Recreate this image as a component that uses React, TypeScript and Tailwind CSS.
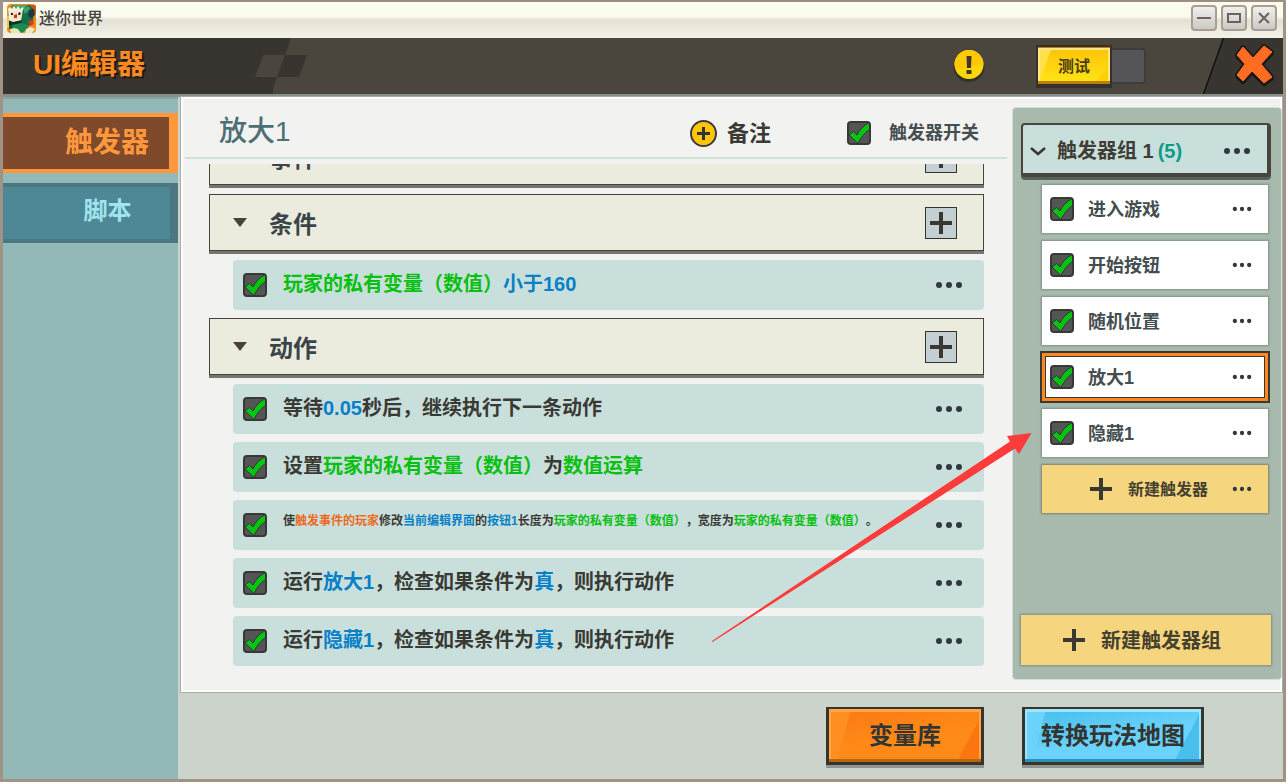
import { useState, type ReactNode } from "react";
import clsx from "clsx";

type Tone = "text" | "value" | "variable" | "event";
type Part = [string, Tone?];
type Rule = { id: string; parts: Part[]; small?: boolean };

const TONES: Record<Tone, string> = {
  text: "text-[#3a3a34]",
  value: "text-[#0880c8]",
  variable: "text-[#08c010]",
  event: "text-[#ee6a20]",
};

const CONDITIONS: Rule[] = [
  { id: "c1", parts: [["玩家的私有变量（数值）", "variable"], ["小于160", "value"]] },
];

const ACTIONS: Rule[] = [
  { id: "a1", parts: [["等待"], ["0.05", "value"], ["秒后，继续执行下一条动作"]] },
  { id: "a2", parts: [["设置"], ["玩家的私有变量（数值）", "variable"], ["为"], ["数值运算", "variable"]] },
  {
    id: "a3",
    small: true,
    parts: [
      ["使"],
      ["触发事件的玩家", "event"],
      ["修改"],
      ["当前编辑界面", "value"],
      ["的"],
      ["按钮1", "value"],
      ["长度为"],
      ["玩家的私有变量（数值）", "variable"],
      ["，宽度为"],
      ["玩家的私有变量（数值）", "variable"],
      ["。"],
    ],
  },
  { id: "a4", parts: [["运行"], ["放大1", "value"], ["，检查如果条件为"], ["真", "value"], ["，则执行动作"]] },
  { id: "a5", parts: [["运行"], ["隐藏1", "value"], ["，检查如果条件为"], ["真", "value"], ["，则执行动作"]] },
];

const TRIGGERS = ["进入游戏", "开始按钮", "随机位置", "放大1", "隐藏1"];

function Check({ label, id }: { label?: string; id?: string }) {
  return (
    <span className="grid size-6 shrink-0">
      <input
        id={id}
        type="checkbox"
        defaultChecked
        aria-label={label}
        className="peer col-start-1 row-start-1 size-6 appearance-none rounded border-2 border-[#383838] bg-[#555]"
      />
      <svg viewBox="0 0 24 24" className="pointer-events-none invisible col-start-1 row-start-1 size-6 peer-checked:visible">
        <path
          d="M2 14 6.500 10.500 10 14C12.500 8.500 16.500 4.500 22.500 1.500V8.500C17.500 12 13.500 17 11 22.500Z"
          fill="#05c512"
          stroke="#333"
          strokeWidth="1"
        />
      </svg>
    </span>
  );
}

function Dots({ small = false, label }: { small?: boolean; label: string }) {
  return (
    <button aria-label={label} className="flex h-6 w-7 shrink-0 items-center justify-center text-[#30393c]">
      <svg viewBox="0 0 28 8" className={clsx("h-2 shrink-0", small ? "w-5" : "w-7")}>
        <circle cx="4" cy="4" r="3" fill="currentColor" />
        <circle cx="14" cy="4" r="3" fill="currentColor" />
        <circle cx="24" cy="4" r="3" fill="currentColor" />
      </svg>
    </button>
  );
}

function Plus() {
  return (
    <svg viewBox="0 0 22 22" className="size-[22px] shrink-0" fill="#3a3832">
      <path d="M9 0h4v9h9v4h-9v9H9v-9H0V9h9z" />
    </svg>
  );
}

function Logo() {
  return (
    <svg viewBox="0 0 29 29" className="size-[29px] rounded">
      <rect width="29" height="29" fill="#f58a10" />
      <path d="M20 1h9v9z" fill="#c8551a" />
      <path d="m1 6 5-5h16l4 4v14l-9 6H2z" fill="#0f5a3a" />
      <path d="m2 5 5-4h14l-5 5 1 3H2z" fill="#46a86c" />
      <path d="m1 5 2-2 2 2 2-3 2 3 2-3 2 3 3-2 2 3 1-2-1 5-2 8-8 2-6-2z" fill="#f4efd6" />
      <path d="m3 7 13 1-2 7-9 2z" fill="#f9e3c4" />
      <path d="M4 9h2v2H4zM12 8l2 1-1 2h-2z" fill="#26241f" />
      <path d="m7 11 3-1v4H7z" fill="#c23a2c" />
      <path d="m16 5 6-3 5 4-1 13-9 3-3-5z" fill="#127044" />
      <path d="m16 5 6-3 1 3-5 5z" fill="#3da36a" />
      <path d="m22 6 5-1 1 6-4 3-3-2z" fill="#22364a" />
      <path d="m1 16 5 2 9-2-1 4-6 2-7-1z" fill="#0a3427" />
      <path d="m5 21 9-2 8 2-2 5-6 3H7z" fill="#1c8a50" />
      <path d="m3 25 4-1 4 1 3 4H4z" fill="#e2e8ae" />
      <path d="m21 17 5-1 1 4-4 2z" fill="#cc3f28" />
      <path d="m19 25 5-2 4 2-3 4h-7z" fill="#f0e6c0" />
      <path d="M0 12h2v12H0z" fill="#f6c244" />
    </svg>
  );
}

function WindowBar() {
  const icons = [
    { label: "最小化", d: "M1 8h14" },
    { label: "最大化", d: "M2 4h12v8H2z" },
    { label: "关闭", d: "m3 3 10 10M13 3 3 13" },
  ];
  return (
    <div className="flex h-[38px] shrink-0 items-center border-t-2 border-[#9b8f85] bg-linear-to-b from-[#fbfbee] from-40% via-[#e5e1d5] via-50% to-[#f4f2e8] pb-1 pl-1 pr-1.5">
      <Logo />
      <span className="ml-[3px] pt-0.5 text-base font-medium text-[#45433f]">迷你世界</span>
      <div className="ml-auto flex gap-1">
        {icons.map((icon) => (
          <button
            key={icon.label}
            aria-label={icon.label}
            className="flex size-[26px] items-center justify-center rounded border-2 border-[#a89e92] bg-linear-to-b from-[#efefec] to-[#cbcac5]"
          >
            <svg viewBox="0 0 16 16" className="size-4" fill="none" stroke="#6c6259" strokeWidth="2">
              <path d={icon.d} />
            </svg>
          </button>
        ))}
      </div>
    </div>
  );
}

function Header() {
  return (
    <header className="flex h-14 shrink-0 bg-[#4a463e]">
      <div className="flex w-[270px] items-center bg-[#383530] pb-0.5 pl-[30px]">
        <h1 className="text-[28px] font-bold text-[#ff8a1e] [text-shadow:2px_2px_0_#1e1c18]">UI编辑器</h1>
      </div>
      <svg viewBox="0 0 60 56" className="-ml-5 h-14 w-[60px]">
        <path d="M0 0h38L18 56H0z" fill="#383530" />
        <path d="M10.500 17H32L24 39H2z" fill="#4a463e" />
        <path d="M32 17h22l-8 22H24z" fill="#383530" />
      </svg>
      <div className="ml-auto flex">
        <button aria-label="提示" className="mr-[51px] flex w-8 items-center">
          <svg viewBox="0 0 32 32" className="size-8">
            <circle cx="16" cy="16.500" r="15.500" fill="#32302b" />
            <circle cx="16" cy="14.500" r="14.500" fill="#ffd60a" />
            <path d="M1.500 14.500a14.500 14.500 0 0 1 29 0L3 20z" fill="#ffc905" />
            <path d="M13.500 6h5l-.5 12h-4zM13.500 20h5v4h-5z" fill="#3c3830" />
          </svg>
        </button>
        <div className="flex items-center pr-[57px]">
          <button className="h-[43px] w-[76px] border-2 border-b-4 border-[#35322d] bg-[#b8800a] pb-[3px] pt-px">
            <span className="flex h-full items-center justify-center border-x-2 border-t-2 border-[#ffe680] bg-[linear-gradient(110deg,#ffe04a_14%,transparent_14%),linear-gradient(130deg,transparent_88%,#ffcf0c_88%),linear-gradient(#ffc40a,#ffe314)] pt-1 text-base font-bold text-[#4a3c14]">
              测试
            </span>
          </button>
          <span className="h-9 w-[34px] rounded-r border-2 border-l-0 border-[#3e3c3b] bg-[#555457]" />
        </div>
        <button aria-label="关闭编辑器" className="w-20">
          <svg viewBox="0 0 80 56" className="h-14 w-20">
            <path d="M20.500 0H80v56H.5z" fill="#383530" />
            <path d="M20.500 0 .5 56" stroke="#111" strokeWidth="1.500" />
            <g strokeLinejoin="round">
              <path d="m40 11 10 11 11-12 8 6-11 12 11 13-8 6-12-12-9 10-6-6 8-11-8-9z" fill="#1b1916" stroke="#1b1916" strokeWidth="3" />
              <path d="m40 9 10 11L61 8l8 6-11 12 11 13-8 6-12-12-9 10-6-6 8-11-8-9z" fill="#1b1916" stroke="#1b1916" strokeWidth="4" />
              <path d="m40 9 10 11L61 8l8 6-11 12 11 13-8 6-12-12-9 10-6-6 8-11-8-9z" fill="#ff6c22" stroke="#ff6c22" strokeWidth="1" />
            </g>
          </svg>
        </button>
      </div>
    </header>
  );
}

function Sidebar() {
  return (
    <nav className="flex w-[175px] shrink-0 flex-col gap-2.5 border-t-2 border-[#86a6a5] bg-[#92b8b7] pt-3.5">
      <button className="flex h-[60px] items-center justify-center border-y-4 border-r-[9px] border-[#ff983c] bg-[#7e4a2b] pl-[42px] text-[28px] font-bold text-[#ff983c]">
        触发器
      </button>
      <button className="flex h-[60px] items-center justify-center border-y-4 border-r-8 border-[#4b7780] bg-[#4e8897] pb-1 pl-[42px] text-2xl font-bold text-[#a0e4ec]">
        脚本
      </button>
    </nav>
  );
}

function Section({ title, children }: { title: string; children?: ReactNode }) {
  return (
    <section>
      <div className="mb-1.5 border-b-[3px] border-[#76766f]">
        <div className="flex h-[57px] items-center border border-[#45433b] bg-[#ebecdd] pl-[23px] pr-[26px]">
          <svg viewBox="0 0 14 9" className="h-[9px] w-3.5" fill="#4a4136">
            <path d="M0 0h14L7 9z" />
          </svg>
          <h3 className="ml-[22px] pt-1 text-2xl font-bold text-[#3b4549]">{title}</h3>
          <button aria-label={`添加${title}`} className="ml-auto flex size-8 items-center justify-center border border-[#34332e] bg-[#c3cfd3]">
            <Plus />
          </button>
        </div>
      </div>
      {children && <ul className="flex flex-col gap-2 pb-2 pl-6">{children}</ul>}
    </section>
  );
}

function Row({ parts, small }: Rule) {
  const text = parts.map((p) => p[0]).join("");
  return (
    <li className="flex h-[50px] items-center rounded bg-[#c9dfdb] pl-2.5 pr-[21px]">
      <Check label={text} />
      <p
        className={clsx(
          "ml-4 flex-1 whitespace-nowrap font-bold [text-spacing-trim:space-all]",
          small ? "pb-2 text-xs" : "pb-0.5 text-xl",
        )}
      >
        {parts.map(([s, tone = "text"], i) => (
          <span key={i} className={TONES[tone]}>
            {s}
          </span>
        ))}
      </p>
      <Dots label="更多" />
    </li>
  );
}

function TriggerDetail() {
  return (
    <div className="flex min-w-0 flex-1 flex-col">
      <div className="ml-0.5 mr-[5px] flex h-[60px] shrink-0 items-center border-b-2 border-[#cfe2d6] pl-[34px] pr-7 pt-2.5">
        <h2 className="pb-0.5 text-[28px] font-medium text-[#4c6f76]">放大1</h2>
        <button className="ml-auto flex items-center gap-2.5 text-[22px] font-bold text-[#3a3933]">
          <svg viewBox="0 0 27 27" className="size-[27px]">
            <circle cx="13.500" cy="13.500" r="12.500" fill="#ffc609" stroke="#3c3a3a" strokeWidth="2" />
            <path d="M12 7h3v5h5v3h-5v5h-3v-5H7v-3h5z" fill="#333" />
          </svg>
          备注
        </button>
        <div className="ml-[76px] flex items-center gap-[18px]">
          <Check id="trigger-switch" />
          <label htmlFor="trigger-switch" className="text-lg font-bold text-[#454e50]">
            触发器开关
          </label>
        </div>
      </div>
      <div className="mt-[5px] min-h-0 flex-1 overflow-hidden pl-[26px] pr-7">
        {/* list is scrolled part way past the first section */}
        <div className="-mt-9">
          <Section title="事件" />
          <Section title="条件">
            {CONDITIONS.map((c) => (
              <Row key={c.id} {...c} />
            ))}
          </Section>
          <Section title="动作">
            {ACTIONS.map((a) => (
              <Row key={a.id} {...a} />
            ))}
          </Section>
        </div>
      </div>
    </div>
  );
}

function TriggerGroup() {
  const [selected, setSelected] = useState("放大1");
  return (
    <aside className="-mr-0.5 mb-2.5 mt-2 flex w-[270px] shrink-0 flex-col rounded border border-[#cfe0d4] bg-[#a8baae] pb-3.5 pl-2 pr-2.5 pt-[15px]">
      <div className="flex h-[54px] shrink-0 items-center rounded border-2 border-b-4 border-r-4 border-[#48453e] bg-[#c9dfdb] pl-1.5 pr-4 pt-1 shadow-[0_3px_0_#59605a]">
        <svg viewBox="0 0 18 12" className="h-3 w-[18px]" fill="none" stroke="#393832" strokeWidth="2.500">
          <path d="m2 3 7 6 7-6" />
        </svg>
        <h2 className="ml-2.5 text-xl font-bold text-[#403d36]">
          触发器组 1<span className="ml-1 text-[#0b9c8c]">(5)</span>
        </h2>
        <span className="ml-auto flex">
          <Dots label="触发器组菜单" />
        </span>
      </div>
      <ul className="ml-[21px] mr-[3px] mt-2 flex flex-col gap-2">
        {TRIGGERS.map((name) => (
          <li
            key={name}
            className={clsx(
              "flex items-center bg-white pl-2 pr-3",
              name === selected
                ? "-m-0.5 h-[52px] border-2 border-[#3a3832] shadow-[inset_0_0_0_3px_#ff8820,inset_0_0_0_4px_#3a3832]"
                : "h-12 shadow-[0_0_2px_1px_#7f8f86]",
            )}
          >
            <Check label={name} />
            <button onClick={() => setSelected(name)} className="ml-3.5 flex-1 pt-0.5 text-left text-lg font-bold text-[#444d50]">
              {name}
            </button>
            <Dots small label={`${name}菜单`} />
          </li>
        ))}
        <li className="flex h-12 items-center bg-[#f5d67f] pl-12 pr-3 shadow-[0_0_2px_1px_#7f8068]">
          <button className="flex flex-1 items-center gap-4 text-base font-bold text-[#45402f]">
            <Plus />
            <span className="pt-0.5">新建触发器</span>
          </button>
          <Dots small label="新建触发器菜单" />
        </li>
      </ul>
      <button className="mt-auto flex h-[50px] shrink-0 items-center justify-center gap-4 bg-[#f5d67f] pr-2 text-xl font-bold text-[#45402f] shadow-[0_0_2px_1px_#7f8f86]">
        <Plus />
        <span className="pt-0.5">新建触发器组</span>
      </button>
    </aside>
  );
}

function Footer() {
  return (
    <footer className="flex h-[87px] shrink-0 justify-end gap-[38px] pr-[79px] pt-[15px] text-2xl font-bold text-[#333532]">
      <button className="h-[58px] w-[158px] border-[3px] border-t-2 border-[#38352f] bg-[#b8650f] pb-[3px] shadow-[0_3px_0_#8f9690]">
        <span className="flex h-full items-center justify-center border-x-2 border-t-[3px] border-[#ffa648] bg-[linear-gradient(105deg,#ff8f20_12%,transparent_12%),linear-gradient(118deg,transparent_88%,#fb7510_88%),linear-gradient(170deg,#fb7d14_10%,#ff8a18_55%)]">
          变量库
        </span>
      </button>
      <button className="h-[58px] w-[182px] border-[3px] border-t-2 border-[#38352f] bg-[#2f8fb5] pb-[3px] shadow-[0_3px_0_#8f9690]">
        <span className="flex h-full items-center justify-center border-x-2 border-t-[3px] border-[#9be6fc] bg-[linear-gradient(105deg,#6ad2fb_10%,transparent_10%),linear-gradient(118deg,transparent_88%,#4abfee_88%),linear-gradient(170deg,#4dc2ef_10%,#6ad3fc_55%)]">
          转换玩法地图
        </span>
      </button>
    </footer>
  );
}

export default function App() {
  return (
    <div className="relative flex min-h-screen flex-col border-x-[3px] border-b-[3px] border-[#a09284] bg-[#cbd3cb] font-['Liberation_Sans','Noto_Sans_CJK_SC',sans-serif]">
      <WindowBar />
      <Header />
      <div className="flex flex-1 border-t-[3px] border-[#868e87]">
        <Sidebar />
        <div className="flex min-w-0 flex-1 flex-col">
          <main className="ml-[3px] mr-px flex flex-1 border-2 border-white bg-[#f2f2f0] shadow-[0_0_0_1px_#a5aea7]">
            <TriggerDetail />
            <TriggerGroup />
          </main>
          <Footer />
        </div>
      </div>
      {/* pointer from the last action to its trigger */}
      <svg viewBox="0 0 320 210" className="pointer-events-none absolute right-[251px] top-[432px] h-[210px] w-80" fill="#fc3b3a">
        <path d="M0 209 298 9.500 295 4 319.500 1 307 22 303 16.500.5 210z" />
      </svg>
    </div>
  );
}
